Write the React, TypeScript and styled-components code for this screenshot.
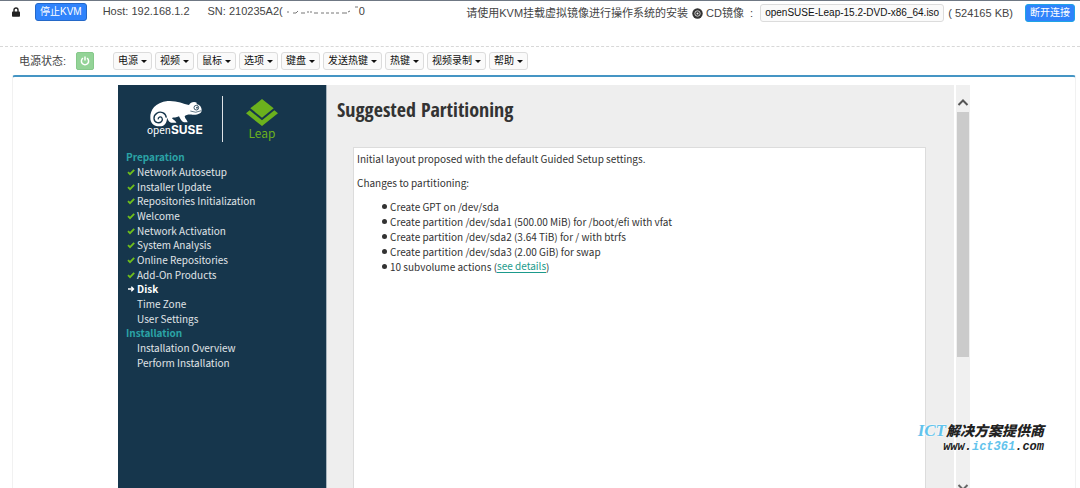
import React from "react";
import styled, { createGlobalStyle } from "styled-components";

const ui = `"Liberation Sans", "Noto Sans CJK SC", sans-serif`;
const installer = `"Noto Sans CJK SC", sans-serif`;

const GlobalStyle = createGlobalStyle`
  * { box-sizing: border-box; }
  body { margin: 0; background: #fff; color: #444; font: 11px/16px ${ui}; }
`;

const Page = styled.div`
  height: 100vh;
  display: flex;
  flex-direction: column;
  overflow: hidden;
  position: relative;
  border-top: 1px solid #6f7884;
`;

const TopBar = styled.header`
  height: 46px;
  flex: none;
  display: flex;
  align-items: flex-start;
  padding: 2px 5px 0 12px;
  border-bottom: 1px dashed #d8d8d8;
  white-space: nowrap;
`;

const LockIcon = styled.svg`
  width: 8px;
  height: 10px;
  margin: 4px 15px 0 0;
`;

const ActionButton = styled.button<{ $edge: string }>`
  height: 18px;
  padding: 0 4px;
  border: 1px solid ${(p) => p.$edge};
  border-radius: 3px;
  background: #2f83fb;
  color: #fff;
  font: 10px/16px ${ui};
`;

const HostText = styled.span`
  margin-left: 16px;
`;

const Serial = styled.span`
  margin-left: 18px;
  display: flex;
  align-items: center;
`;

const Media = styled.div`
  margin-left: auto;
  display: flex;
  align-items: center;
  gap: 4px;
  height: 20px;
`;

const DiscLabel = styled.span`
  display: flex;
  align-items: center;
  gap: 3px;
`;

const Size = styled.span`
  margin-right: 8px;
`;

const GreyButton = styled.button`
  height: 18px;
  padding: 0 4px;
  border: 1px solid #dcdcdc;
  border-radius: 3px;
  background: #fafafa;
  color: #111;
  font: 10px/16px ${ui};
  display: flex;
  align-items: center;
  gap: 3px;
  white-space: nowrap;
`;

const Caret = styled.span`
  border: 3px solid transparent;
  border-top-color: #111;
  border-bottom: 0;
  margin-top: 1px;
`;

const MenuBar = styled.nav`
  flex: none;
  height: 28px;
  display: flex;
  align-items: center;
  gap: 3px;
  padding-left: 19px;
`;

const PowerLabel = styled.span`
  width: 54px;
`;

const PowerButton = styled.button`
  width: 18px;
  height: 18px;
  margin-right: 16px;
  padding: 0;
  border: 1px solid #86c98a;
  border-radius: 2px;
  background: #93d397;
  display: flex;
  align-items: center;
  justify-content: center;
`;

const Frame = styled.main`
  flex: 1;
  min-height: 0;
  margin: 0 4px 0 12px;
  padding: 8px 105px 0;
  border: 1px solid #f1f1f1;
  border-top: 2px solid #4595c4;
  border-bottom: 0;
  border-radius: 3px 3px 0 0;
  display: flex;
`;

const Sidebar = styled.aside`
  width: 209px;
  flex: none;
  background: #16364c;
  border-right: 1px solid #a9b5be;
  color: #e4e8ea;
  font: 10px/14px ${installer};
`;

const Brands = styled.div`
  display: flex;
  padding: 11px 0 0 29px;
  height: 65px;
`;

const Suse = styled.div`
  width: 76px;
  height: 46px;
  border-right: 1px solid #dfe3e6;
  color: #fff;
`;

const Chameleon = styled.svg`
  display: block;
  width: 56px;
  height: 28px;
  margin-top: 3px;
`;

const SuseName = styled.div`
  display: flex;
  align-items: baseline;
  margin-top: -4px;
  font-size: 10px;
  line-height: 14px;

  b { font: 700 12px/14px Inter, sans-serif; }
`;

const Leap = styled.div`
  width: 78px;
  display: flex;
  flex-direction: column;
  align-items: center;
  color: #6bb11d;
  font-size: 12px;
  line-height: 14px;
`;

const LeapIcon = styled.svg`
  width: 32px;
  height: 27px;
  margin: 3px 0 0;
`;

const Steps = styled.ol`
  list-style: none;
  margin: 0;
  padding: 0 0 0 8px;
  height: 220px;
  display: grid;
  grid-auto-rows: 1fr;
`;

const Step = styled.li<{ $kind: string }>`
  display: flex;
  align-items: center;
  white-space: nowrap;
  font-weight: ${(p) => (p.$kind === "head" || p.$kind === "now" ? 700 : 400)};
  color: ${(p) => (p.$kind === "head" ? "#2ba3a6" : p.$kind === "now" ? "#fff" : "#e0e5e8")};
`;

const Mark = styled.span`
  width: 11px;
  display: flex;
  padding-left: 1px;
`;

const Panel = styled.section`
  flex: 1;
  min-width: 0;
  display: flex;
  flex-direction: column;
  padding: 10px 28px 0 10px;
  background: #eee;
  color: #333;
`;

const Title = styled.h1`
  margin: 0 0 22px;
  font: 700 20px/30px "Open Sans Condensed", "Liberation Sans Narrow", "Roboto Condensed", sans-serif;
`;

const Proposal = styled.article`
  flex: 1;
  margin-left: 16px;
  padding: 3px;
  background: #fff;
  border: 1px solid #dcdcdc;
  border-bottom: 0;
  font: 10px/15px ${installer};

  p { margin: 0 0 9px; }
`;

const Changes = styled.ul`
  list-style: none;
  margin: 0;
  padding: 0 0 0 25px;
  height: 73px;
  display: grid;
  grid-auto-rows: 1fr;

  li { display: flex; align-items: center; white-space: pre; }
  li::before {
    content: "";
    width: 5px;
    height: 5px;
    margin-right: 3px;
    border-radius: 50%;
    background: #333;
  }
`;

const Details = styled.a`
  color: #1b9a8c;
  text-decoration: none;
  line-height: 12px;
  border-bottom: 1px solid #1b9a8c;
`;

const Scroll = styled.div`
  width: 14px;
  flex: none;
  margin-left: 2px;
  display: flex;
  flex-direction: column;
  background: #f0f0f0;
`;

const Arrow = styled.svg`
  flex: none;
  width: 14px;
  height: 27px;
`;

const Thumb = styled.div`
  flex: 0 0 245px;
  margin: 0 1px;
  background: #cbcbcb;
`;

const EndArrow = styled.svg`
  flex: none;
  width: 14px;
  height: 4px;
  margin-top: auto;
`;

const Watermark = styled.div`
  position: absolute;
  right: 36px;
  bottom: 33px;
  color: #222;
  text-align: right;
  font: italic 900 14px/18px "Noto Sans CJK SC", sans-serif;
  text-shadow: 0 0 2px #fff, 0 0 2px #fff;
`;

const Ict = styled.span`
  color: #62c3ec;
  font: italic 700 17px/18px "Liberation Serif", serif;
`;

const Site = styled.div`
  font: italic 700 12px/15px "Liberation Mono", monospace;

  span { color: #62c3ec; }
`;

const menus = ["电源", "视频", "鼠标", "选项", "键盘", "发送热键", "热键", "视频录制", "帮助"];

const steps: [string, string][] = [
  ["head", "Preparation"],
  ["done", "Network Autosetup"],
  ["done", "Installer Update"],
  ["done", "Repositories Initialization"],
  ["done", "Welcome"],
  ["done", "Network Activation"],
  ["done", "System Analysis"],
  ["done", "Online Repositories"],
  ["done", "Add-On Products"],
  ["now", "Disk"],
  ["todo", "Time Zone"],
  ["todo", "User Settings"],
  ["head", "Installation"],
  ["todo", "Installation Overview"],
  ["todo", "Perform Installation"],
];

const changes = [
  "Create GPT on /dev/sda",
  "Create partition /dev/sda1 (500.00 MiB) for /boot/efi with vfat",
  "Create partition /dev/sda2 (3.64 TiB) for / with btrfs",
  "Create partition /dev/sda3 (2.00 GiB) for swap",
];

function StepMark({ kind }: { kind: string }) {
  if (kind === "head") return null;
  return (
    <Mark>
      {kind === "done" && (
        <svg width="8" height="8" viewBox="0 0 8 8" fill="none" stroke="#6fbe1c" strokeWidth="1.8">
          <path d="M1 4.2 3 6.2 7.2 1.8" />
        </svg>
      )}
      {kind === "now" && (
        <svg width="8" height="8" viewBox="0 0 8 8" fill="none" stroke="#fff" strokeWidth="1.4">
          <path d="M1 4H6.5M4.3 1.8 6.5 4 4.3 6.2" />
        </svg>
      )}
    </Mark>
  );
}

export default function App() {
  return (
    <Page>
      <GlobalStyle />
      <TopBar>
        <LockIcon viewBox="0 0 8 10">
          <path d="M2 5V3a2 2 0 0 1 4 0v2" fill="none" stroke="#222" strokeWidth="1.4" />
          <rect y="4.5" width="8" height="5.2" rx=".8" fill="#222" />
        </LockIcon>
        <ActionButton $edge="#2468c8">停止KVM</ActionButton>
        <HostText>Host: 192.168.1.2</HostText>
        <Serial>
          SN: 210235A2(
          <svg width="76" height="12" viewBox="0 0 76 12" fill="none" stroke="#777" strokeWidth="1">
            <path d="M4 7h2M10 8h3l2-2M18 8h4M25 8v-2M28 8v-2M31 8h4M38 8h3M43 8h3M48 8h3M53 8h3M59 8h5M65 7l2-1M72 2h3" />
          </svg>
          0
        </Serial>
        <Media>
          <span>请使用KVM挂载虚拟镜像进行操作系统的安装</span>
          <DiscLabel>
            <svg width="11" height="11" viewBox="0 0 11 11">
              <circle cx="5.5" cy="5.5" r="5.2" fill="#333" />
              <circle cx="5.5" cy="5.5" r="2.7" fill="none" stroke="#ddd" strokeWidth=".9" />
              <circle cx="5.5" cy="5.5" r="1" fill="#eee" />
            </svg>
            CD镜像 &nbsp;:&nbsp;
          </DiscLabel>
          <GreyButton>openSUSE-Leap-15.2-DVD-x86_64.iso</GreyButton>
          <Size>( 524165 KB)</Size>
          <ActionButton $edge="#20a4e4">断开连接</ActionButton>
        </Media>
      </TopBar>
      <MenuBar>
        <PowerLabel>电源状态:</PowerLabel>
        <PowerButton aria-label="电源">
          <svg width="10" height="10" viewBox="0 0 10 10" fill="none" stroke="#fff" strokeWidth="1.5">
            <path d="M3 2.2a3.6 3.6 0 1 0 4 0M5 .5v4" />
          </svg>
        </PowerButton>
        {menus.map((m) => (
          <GreyButton key={m}>
            {m}
            <Caret />
          </GreyButton>
        ))}
      </MenuBar>
      <Frame>
        <Sidebar>
          <Brands>
            <Suse>
              <Chameleon viewBox="88 48 168 84">
                <path
                  fill="#fff"
                  d="M98 104C97 82 112 58 150 54C176 52 196 62 214 66C218 58 230 54 238 60L236 63C246 65 252 72 252 81C252 92 240 96 224 95C212 94 204 96 201 100C202 108 208 110 210 118H199C192 116 188 108 184 100C176 105 168 103 163 105C164 110 174 112 176 119H160C152 116 150 107 148 104C148 122 138 131 124 130C108 129 98 120 98 104Z"
                />
                <path
                  fill="none"
                  stroke="#16364c"
                  strokeWidth="4"
                  d="M146 104C144 88 128 84 117 91C105 99 107 116 119 119C130 121 137 112 133 105C129 99 120 102 122 109"
                />
                <circle cx="236" cy="74" r="7" fill="#fff" stroke="#16364c" strokeWidth="2.5" />
                <circle cx="238" cy="74" r="2.5" fill="#16364c" />
                <path d="M218 84Q234 92 251 83" fill="none" stroke="#16364c" strokeWidth="2" />
              </Chameleon>
              <SuseName>
                open<b>SUSE</b>
              </SuseName>
            </Suse>
            <Leap>
              <LeapIcon viewBox="0 0 96 81" fill="#6bb11d">
                <path d="M48 0 83 28 48 56 13 28Z" />
                <path d="M0 43 11 34 48 64 85 34 96 43 48 81Z" />
              </LeapIcon>
              Leap
            </Leap>
          </Brands>
          <Steps>
            {steps.map(([kind, text]) => (
              <Step key={text} $kind={kind}>
                <StepMark kind={kind} />
                {text}
              </Step>
            ))}
          </Steps>
        </Sidebar>
        <Panel>
          <Title>Suggested Partitioning</Title>
          <Proposal>
            <p>Initial layout proposed with the default Guided Setup settings.</p>
            <p>Changes to partitioning:</p>
            <Changes>
              {changes.map((c) => (
                <li key={c}>{c}</li>
              ))}
              <li>
                10 subvolume actions (<Details href="#details">see details</Details>)
              </li>
            </Changes>
          </Proposal>
        </Panel>
        <Scroll>
          <Arrow viewBox="0 0 14 27" fill="none" stroke="#555" strokeWidth="2">
            <path d="M2.5 20 7 15.5 11.5 20" />
          </Arrow>
          <Thumb />
          <EndArrow viewBox="0 0 14 4" fill="none" stroke="#666" strokeWidth="2">
            <path d="M2.5 1 7 5.5 11.5 1" />
          </EndArrow>
        </Scroll>
      </Frame>
      <Watermark>
        <Ict>ICT</Ict>解决方案提供商
        <Site>
          www.<span>ict361</span>.com
        </Site>
      </Watermark>
    </Page>
  );
}
